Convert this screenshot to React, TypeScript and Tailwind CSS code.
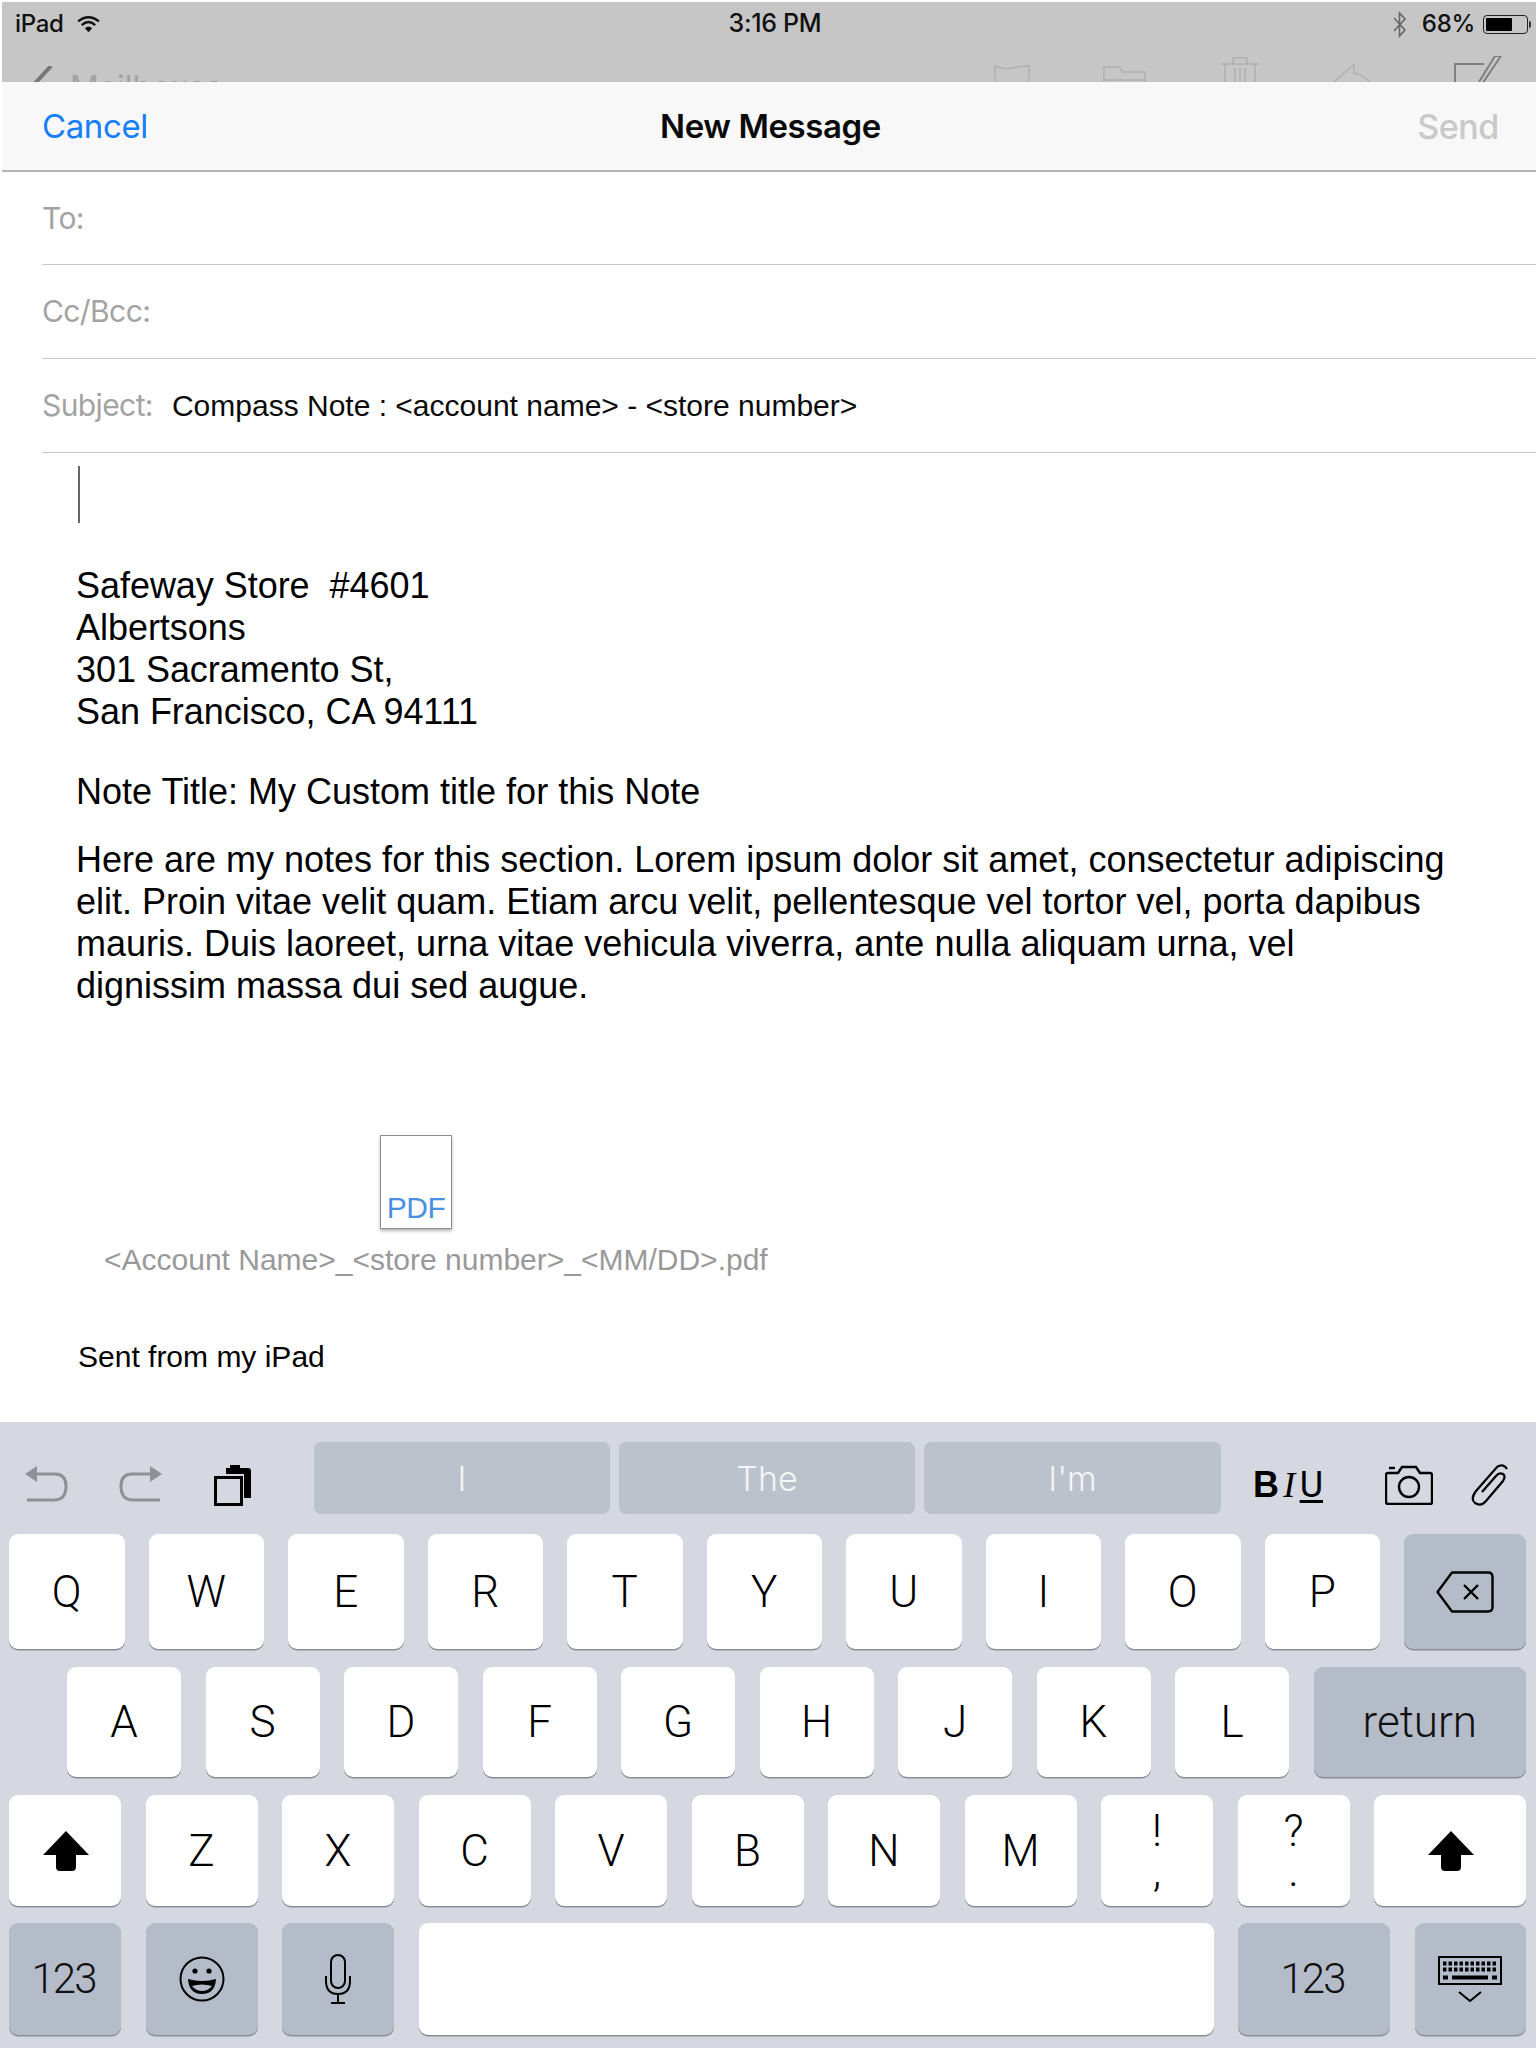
import React from "react";

const keyBase = "flex items-center justify-center rounded-[9px] shadow-[0_1.5px_0_#8b8e95]";
const white = keyBase + " bg-white";
const gray = keyBase + " bg-[#b5bcc9]";
const kf = "font-['Roboto',sans-serif] text-[44px] leading-none text-black font-[350]";
const num = "font-['Roboto',sans-serif] text-[42px] leading-none text-[#111] font-light tracking-[-2px] pr-[3px]";

function Key({ label, cls = "flex-1" }: { label: string; cls?: string }) {
  return <div className={`${white} ${cls} ${kf}`}>{label}</div>;
}

function Shift() {
  return (
    <svg width="46" height="40" viewBox="0 0 46 40" className="ml-[2px]">
      <path d="M23 0 L46 24 L33 24 L33 36 Q33 40 29 40 L17 40 Q13 40 13 36 L13 24 L0 24 Z" fill="#000" />
    </svg>
  );
}

function Undo({ flip = false }: { flip?: boolean }) {
  return (
    <svg width="43" height="36" viewBox="0 0 43 36" className={flip ? "-scale-x-100" : ""}>
      <path d="M12 8 L0 8 L12 0 Z M12 8 L0 8 L12 16 Z" fill="#8e9196" />
      <path d="M10 8 H30 Q41 8 41 20 Q41 34 29 34 H2" fill="none" stroke="#8e9196" strokeWidth="3" />
    </svg>
  );
}

function StatusBar() {
  return (
    <div className="ml-[2px] mt-[2px] h-[80px] bg-[#c6c6c6] overflow-hidden flex flex-col">
      <div className="h-[44px] shrink-0 grid grid-cols-3 items-center text-[24px] tracking-[-0.3px] text-[#111] font-['Inter',sans-serif] font-medium">
        <div className="flex items-center pl-[13px] gap-[12px]">
          <span>iPad</span>
          <svg width="25" height="17" viewBox="0 0 24 16">
            <path d="M12 15.5 L8.5 11.5 Q12 8.5 15.5 11.5 Z" fill="#111" />
            <path d="M5.5 8.5 Q12 2.8 18.5 8.5" fill="none" stroke="#111" strokeWidth="2.2" />
            <path d="M2 5 Q12 -3 22 5" fill="none" stroke="#111" strokeWidth="2.2" />
          </svg>
        </div>
        <div className="text-center pl-[12px] text-[25px]">3:16 PM</div>
        <div className="flex items-center justify-end pr-[3px]">
          <svg width="14" height="27" viewBox="0 0 14 27" className="mr-[15px]">
            <path d="M1 7 L12 19 L6.5 25 V2 L12 8 L1 20" fill="none" stroke="#666" strokeWidth="1.6" />
          </svg>
          <span className="mr-[8px]">68%</span>
          <div className="w-[45px] h-[19px] border-[1.5px] border-[#222] rounded-[4px] p-[2px] flex">
            <div className="w-[26px] bg-black rounded-[1px]" />
          </div>
          <div className="ml-[1px] mr-[2px] w-[2px] h-[7px] bg-[#333] rounded-r-[2px]" />
        </div>
      </div>
      <div className="flex-1 relative flex items-start">
        <svg width="26" height="24" viewBox="0 0 26 24" className="ml-[25px] mt-[20px]">
          <path d="M24 0 L2 24" fill="none" stroke="#777" strokeWidth="4" />
        </svg>
        <span className="ml-[17px] mt-[26px] h-[10px] text-[32px] leading-[32px] text-[#a2a2a2] font-['Inter',sans-serif]">Mailboxes</span>
        <div className="ml-auto flex items-start">
          <svg width="36" height="24" viewBox="0 0 36 24" className="mr-[73px] mt-[19px]">
            <path d="M1 24 V1 Q10 5 18 3 Q27 1 35 1 V24" fill="none" stroke="#b0b0b0" strokeWidth="1.5" />
          </svg>
          <svg width="43" height="24" viewBox="0 0 43 24" className="mr-[75px] mt-[20px]">
            <path d="M1 24 V1 H16 L20 6 H42 V24 M1 14 H42" fill="none" stroke="#b0b0b0" strokeWidth="1.5" />
          </svg>
          <svg width="38" height="34" viewBox="0 0 38 34" className="mr-[73px] mt-[10px]">
            <path d="M0 8 H38 M12 8 V2 H26 V8 M4 8 V34 M34 8 V34 M14 12 V34 M19 12 V34 M24 12 V34" fill="none" stroke="#b0b0b0" strokeWidth="1.5" />
          </svg>
          <svg width="44" height="28" viewBox="0 0 44 28" className="mr-[78px] mt-[17px]">
            <path d="M22 1 L1 20 L22 20 Q36 20 43 28 M22 1 V10 Q36 12 43 28" fill="none" stroke="#b0b0b0" strokeWidth="1.5" />
          </svg>
          <svg width="48" height="34" viewBox="0 0 48 34" className="mr-[34px] mt-[10px]">
            <path d="M30 8 H1 V34 M47 0 L24 34 M41 0 L20 34 M47 0 L41 0" fill="none" stroke="#808080" strokeWidth="2" />
          </svg>
        </div>
      </div>
    </div>
  );
}

function NavBar() {
  return (
    <div className="ml-[2px] h-[90px] bg-[#f8f8f8] border-b-[2px] border-[#b5b5b5] grid grid-cols-3 items-center pl-[40px] pr-[37px] text-[33px] font-['Inter',sans-serif] tracking-[-0.4px]">
      <div className="text-[#157efb] pt-[2px]">Cancel</div>
      <div className="text-center text-[#0a0a0a] font-semibold pt-[2px]">New Message</div>
      <div className="text-right text-[#c9c9c9] font-medium text-[34px]">Send</div>
    </div>
  );
}

function Field({ label, value, h = "h-[94px]" }: { label: string; value?: string; h?: string }) {
  return (
    <div className={`${h} ml-[42px] border-b-[1.5px] border-[#c8c8c8] flex items-center`}>
      <span className="text-[#a3a3a3] text-[30px] font-['Inter',sans-serif] tracking-[-0.6px]">{label}</span>
      {value && <span className="ml-[19px] text-[30px] text-[#0a0a0a] font-['Liberation_Sans',sans-serif]">{value}</span>}
    </div>
  );
}

function Body() {
  return (
    <div className="h-[969px] pt-[13px] font-['Liberation_Sans',sans-serif] text-black">
      <div className="ml-[78px] h-[57px] w-[2px] bg-[#666]" />
      <div className="ml-[76px] mt-[42px] text-[36px] leading-[42px] tracking-[-0.04px]">
        <div>Safeway Store&nbsp; #4601</div>
        <div>Albertsons</div>
        <div>301 Sacramento St,</div>
        <div>San Francisco, CA 94111</div>
      </div>
      <div className="ml-[76px] mt-[38px] text-[36px] leading-[42px]">Note Title: My Custom title for this Note</div>
      <div className="ml-[76px] mt-[26px] w-[1372px] text-[36px] leading-[42px]">
        Here are my notes for this section. Lorem ipsum dolor sit amet, consectetur adipiscing elit. Proin vitae velit quam. Etiam arcu velit, pellentesque vel tortor vel, porta dapibus mauris. Duis laoreet, urna vitae vehicula viverra, ante nulla aliquam urna, vel dignissim massa dui sed augue.
      </div>
      <div className="ml-[380px] mt-[128px] w-[72px] h-[94px] bg-white border border-[#8f8f8f] shadow-[0_2px_3px_rgba(0,0,0,0.3)] flex items-end justify-center pb-[3px]">
        <span className="text-[#4a90e2] text-[30px] leading-[34px] tracking-[-0.5px]">PDF</span>
      </div>
      <div className="ml-[104px] mt-[11px] text-[#999] text-[30px] leading-[40px]">&lt;Account Name&gt;_&lt;store number&gt;_&lt;MM/DD&gt;.pdf</div>
      <div className="ml-[78px] mt-[57px] text-[30px] leading-[40px]">Sent from my iPad</div>
    </div>
  );
}

function Toolbar() {
  return (
    <div className="h-[112px] flex items-start pt-[20px] pl-[25px]">
      <div className="mt-[24px] flex items-start">
        <Undo />
        <div className="ml-[51px]">
          <Undo flip />
        </div>
        <svg width="38" height="42" viewBox="0 0 38 42" className="ml-[52px] -mt-[2px]">
          <path d="M12 8 V4 H16 V1 H26 V4 H34 Q37 4 37 7 V34 H30 V10 H12 Z" fill="#000" />
          <rect x="1.5" y="13.5" width="26" height="27" fill="none" stroke="#000" strokeWidth="3" />
        </svg>
      </div>
      <div className="ml-[62px] flex gap-[9px] font-['Inter',sans-serif] font-light text-[34px] text-[#f4f5f7]">
        <div className="w-[296px] h-[72px] rounded-[7px] bg-[#bbc2cb] flex items-center justify-center">I</div>
        <div className="w-[296px] h-[72px] rounded-[7px] bg-[#bbc2cb] flex items-center justify-center">The</div>
        <div className="w-[297px] h-[72px] rounded-[7px] bg-[#bbc2cb] flex items-center justify-center">I'm</div>
      </div>
      <div className="ml-[32px] mt-[24px] w-[70px] flex items-center justify-between text-[36px] leading-[38px] text-black">
        <span className="font-['Liberation_Sans',sans-serif] font-bold">B</span>
        <span className="font-['Liberation_Serif',serif] italic">I</span>
        <span className="font-['Roboto',sans-serif] underline decoration-[3px] underline-offset-[3px]">U</span>
      </div>
      <svg width="48" height="40" viewBox="0 0 48 40" className="ml-[62px] mt-[23px]">
        <path d="M3 8 H13 L17 2 H31 L35 8 H45 Q47 8 47 10 V37 Q47 39 45 39 H3 Q1 39 1 37 V10 Q1 8 3 8 Z" fill="none" stroke="#000" strokeWidth="2.4" />
        <circle cx="24" cy="22" r="10" fill="none" stroke="#000" strokeWidth="2.4" />
        <path d="M4 3 H10" stroke="#000" strokeWidth="2.4" />
      </svg>
      <svg width="40" height="42" viewBox="0 0 40 42" className="ml-[37px] mt-[22px]">
        <path d="M36 5 Q32 -1 26 3 L5 27 Q-1 35 4 39 Q10 43 15 37 L32 17 Q35 12 32 10 Q28 8 25 12 L11 28" fill="none" stroke="#000" strokeWidth="2.2" transform="translate(1 0)" />
      </svg>
    </div>
  );
}

function Keyboard() {
  return (
    <div className="h-[626px] bg-[#d5d8e0] flex flex-col">
      <Toolbar />
      <div className="h-[115px] flex gap-[24px] pl-[9px] pr-[10px]">
        {"QWERTYUIOP".split("").map((k) => <Key key={k} label={k} />)}
        <div className={`${gray} w-[122px] shrink-0`}>
          <svg width="58" height="42" viewBox="0 0 58 42">
            <path d="M16 1.5 H52 Q56.5 1.5 56.5 6 V36 Q56.5 40.5 52 40.5 H16 L1.5 21 Z" fill="none" stroke="#000" strokeWidth="2.4" strokeLinejoin="round" />
            <path d="M28 14 L42 28 M42 14 L28 28" stroke="#000" strokeWidth="2.4" />
          </svg>
        </div>
      </div>
      <div className="mt-[18px] h-[110px] flex gap-[24.5px] pl-[67px] pr-[10px]">
        {"ASDFGHJKL".split("").map((k) => <Key key={k} label={k} cls="w-[114px] shrink-0" />)}
        <div className={`${gray} flex-1 font-['Roboto',sans-serif] font-light text-[44px] text-[#111]`}>return</div>
      </div>
      <div className="mt-[18px] h-[111px] flex gap-[24.5px] pl-[9px] pr-[10px]">
        <div className={`${white} w-[112px] shrink-0`}><Shift /></div>
        {"ZXCVBNM".split("").map((k) => <Key key={k} label={k} cls="w-[112px] shrink-0" />)}
        <div className={`${white} w-[112px] shrink-0 flex-col gap-[2px] font-['Roboto',sans-serif] text-[44px] font-[350] text-black`}>
          <span className="leading-[38px]">!</span>
          <span className="leading-[38px]">,</span>
        </div>
        <div className={`${white} w-[112px] shrink-0 flex-col gap-[2px] font-['Roboto',sans-serif] text-[44px] font-[350] text-black`}>
          <span className="leading-[38px]">?</span>
          <span className="leading-[38px]">.</span>
        </div>
        <div className={`${white} flex-1`}><Shift /></div>
      </div>
      <div className="mt-[17px] h-[112px] flex gap-[24.5px] pl-[9px] pr-[10px]">
        <div className={`${gray} w-[112px] shrink-0 ${num}`}>123</div>
        <div className={`${gray} w-[112px] shrink-0`}>
          <svg width="46" height="46" viewBox="0 0 46 46">
            <circle cx="23" cy="23" r="21.5" fill="none" stroke="#000" strokeWidth="2" />
            <circle cx="16" cy="15" r="2.6" fill="#000" />
            <circle cx="30" cy="15" r="2.6" fill="#000" />
            <path d="M9 23 Q23 27 37 23 Q36 38 23 38 Q10 38 9 23 Z" fill="#000" />
            <path d="M13 30 Q23 27 33 30 Q29 35 23 35 Q17 35 13 30 Z" fill="#b5bcc9" />
          </svg>
        </div>
        <div className={`${gray} w-[112px] shrink-0`}>
          <svg width="26" height="50" viewBox="0 0 26 50">
            <rect x="6" y="1" width="14" height="33" rx="7" fill="none" stroke="#000" strokeWidth="2" />
            <path d="M1 22 V27 Q1 40 13 40 Q25 40 25 27 V22 M13 40 V48 M6 49 H20" fill="none" stroke="#000" strokeWidth="2" />
          </svg>
        </div>
        <div className={`${white} w-[795px] shrink-0`} />
        <div className={`${gray} w-[152px] shrink-0 ${num}`}>123</div>
        <div className={`${gray} flex-1`}>
          <svg width="64" height="46" viewBox="0 0 64 46">
            <rect x="1" y="1" width="62" height="27" fill="none" stroke="#000" strokeWidth="2" />
            <path d="M5 7.5 H59 M5 13.5 H59" stroke="#000" strokeWidth="4" strokeDasharray="3.5 2" />
            <path d="M14 21.5 H50" stroke="#000" strokeWidth="4" />
            <path d="M5 21.5 H10 M54 21.5 H59" stroke="#000" strokeWidth="4" />
            <path d="M21 36 L32 45 L43 36" fill="none" stroke="#000" strokeWidth="2" />
          </svg>
        </div>
      </div>
    </div>
  );
}

export default function App() {
  return (
    <div className="w-[1536px] h-[2048px] bg-white overflow-hidden">
      <StatusBar />
      <NavBar />
      <Field label="To:" h="h-[93px]" />
      <Field label="Cc/Bcc:" />
      <Field label="Subject:" value="Compass Note : <account name> - <store number>" />
      <Body />
      <Keyboard />
    </div>
  );
}
